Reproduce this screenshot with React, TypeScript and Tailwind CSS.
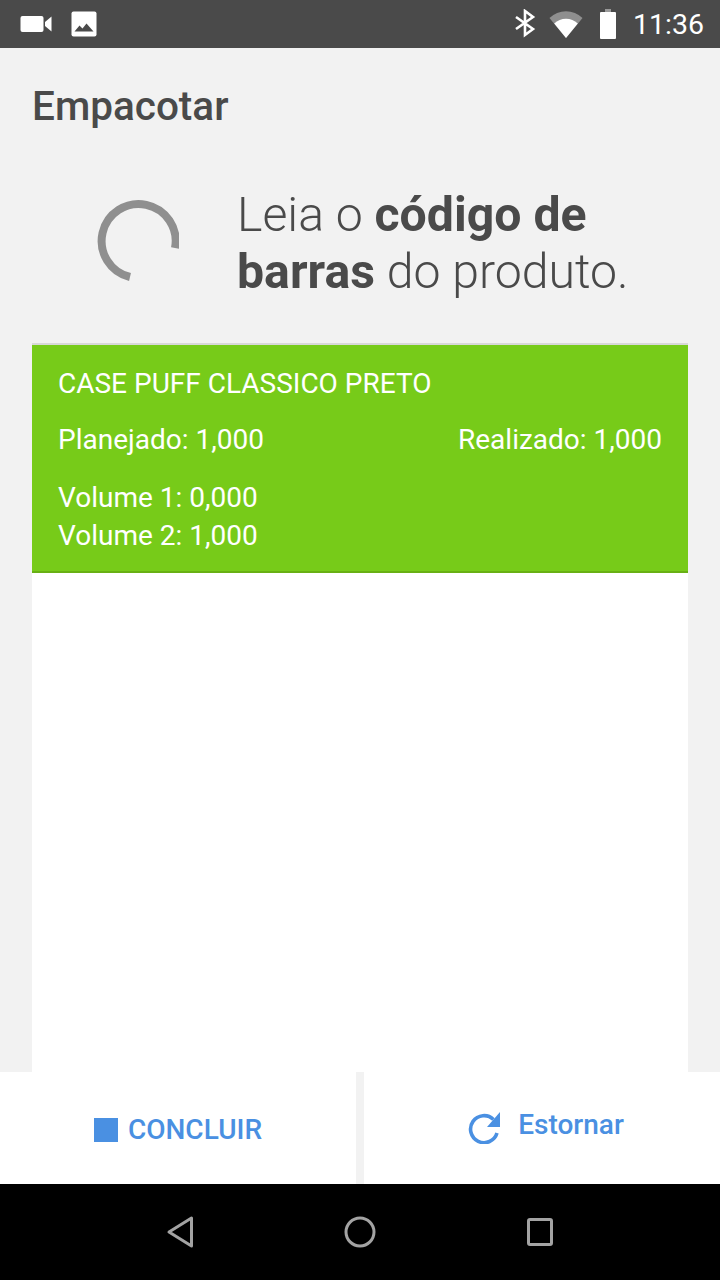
function StatusBar() {
  return (
    <div className="h-12 bg-[#4a4a4a] flex items-center justify-between pl-5 pr-4 text-white">
      <div className="flex items-center gap-[19px]">
        <svg width="32" height="18" viewBox="0 0 32 18" fill="#fff">
          <rect x="0.5" y="1" width="23" height="16" rx="2" />
          <path d="M25 7 L31.5 1.5 V16.5 L25 11 Z" />
        </svg>
        <svg width="26" height="26" viewBox="0 0 26 26">
          <rect x="0.5" y="0.5" width="25" height="25" rx="2" fill="#fff" />
          <path d="M3.5 20.5 L8.5 14.5 L11.5 17.5 L15.5 12.5 L22.5 20.5 Z" fill="#4a4a4a" />
        </svg>
      </div>
      <div className="flex items-center">
        <svg width="22" height="30" viewBox="0 0 22 30" fill="none" stroke="#fff" strokeWidth="2.6" className="mr-[13px]">
          <path d="M2 8 L19 20 L11 26 V2 L19 8 L2 20" />
        </svg>
        <svg width="34" height="28" viewBox="0 0 36 28" preserveAspectRatio="none" className="mr-[17px]">
          <path d="M0.5 8 A26 26 0 0 1 35.5 8 L18 28 Z" fill="#8f8f8f" />
          <path d="M5.5 13.5 A19 19 0 0 1 30.5 13.5 L18 28 Z" fill="#fff" />
        </svg>
        <svg width="16" height="30" viewBox="0 0 16 30" className="mr-[17px]">
          <rect x="5" y="0" width="6" height="4" fill="#9a9a9a" />
          <rect x="0" y="3" width="16" height="27" rx="1" fill="#fff" />
        </svg>
        <span className="text-[28.5px] leading-none pt-[3px]">11:36</span>
      </div>
    </div>
  )
}

function Spinner() {
  return (
    <svg width="84" height="84" viewBox="0 0 84 84" fill="none" stroke="#8f8f8f" strokeWidth="8" className="mb-[6px]">
      <path d="M80 50 A37 37 0 1 0 35 79" />
    </svg>
  )
}

function RefreshIcon() {
  return (
    <svg width="32" height="32" viewBox="0 0 32 32" className="mr-[18px]">
      <path d="M25.5 7.5 A13.5 13.5 0 1 0 29 21" fill="none" stroke="#4a90e2" strokeWidth="3.6" />
      <path d="M32 0 V15 H19 Z" fill="#4a90e2" />
    </svg>
  )
}

function ActionBar() {
  return (
    <div className="h-28 flex bg-[#f2f2f2] gap-2 font-medium text-[#4a90e2] text-[28px] shrink-0">
      <div className="w-[356px] bg-white flex items-center justify-center pt-[3px]">
        <div className="w-6 h-6 bg-[#4a90e2] mr-[10px]" />
        <span>CONCLUIR</span>
      </div>
      <div className="flex-1 bg-white flex items-center justify-center pl-[8px]">
        <RefreshIcon />
        <span className="-mt-[7px]">Estornar</span>
      </div>
    </div>
  )
}

function NavBar() {
  return (
    <div className="h-24 bg-black flex items-center justify-center shrink-0">
      <svg width="400" height="40" viewBox="0 0 400 40" fill="none" stroke="#a3a3a3" strokeWidth="3" strokeLinejoin="round">
        <path d="M9 20 L31.5 6 V34 Z" />
        <circle cx="200" cy="20" r="14" />
        <rect x="368.5" y="7.5" width="23" height="25" rx="1.5" />
      </svg>
    </div>
  )
}

export default function App() {
  return (
    <div className="w-[720px] h-[1280px] flex flex-col bg-[#f2f2f2] overflow-hidden font-[Roboto,sans-serif]">
      <StatusBar />
      <div className="flex-1 flex flex-col min-h-0">
        <h1 className="pl-[32px] pt-[33px] text-[40.5px] leading-[50px] font-medium text-[#4a4a4a]">Empacotar</h1>
        <div className="flex items-center pl-[95px] mt-[54px] h-[116px]">
          <Spinner />
          <p className="ml-[58px] text-[48.2px] leading-[57px] font-light text-[#4a4a4a]">
            Leia o <b className="font-bold">código de</b>
            <br />
            <b className="font-bold">barras</b> do produto.
          </p>
        </div>
        <div className="mx-8 mt-[42px] flex-1 bg-white border-t-2 border-[#d8d8d8]">
          <div className="bg-[#77cb19] border-b-2 border-[#68b014] px-[26px] pt-[20px] pb-[16px] text-white text-[28px] leading-[38px]">
            <div>CASE PUFF CLASSICO PRETO</div>
            <div className="flex justify-between mt-[18px]">
              <span>Planejado: 1,000</span>
              <span>Realizado: 1,000</span>
            </div>
            <div className="mt-[20px]">Volume 1: 0,000</div>
            <div>Volume 2: 1,000</div>
          </div>
        </div>
      </div>
      <ActionBar />
      <NavBar />
    </div>
  )
}
